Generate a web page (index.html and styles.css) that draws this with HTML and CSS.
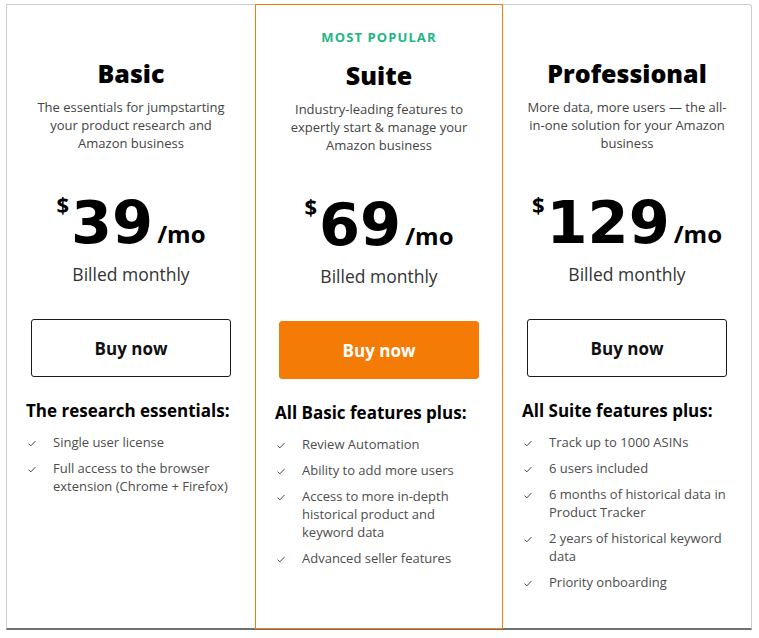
FILE: index.html
```html
<!DOCTYPE html>
<html lang="en">
<head>
<meta charset="utf-8">
<title>Pricing</title>
<link rel="stylesheet" href="styles.css">
</head>
<body>
<div class="pricing">
  <section class="plan">
    <h2 class="plan-name">Basic</h2>
    <p class="plan-desc">The essentials for jumpstarting your product research and Amazon business</p>
    <div class="price"><span class="cur">$</span><span class="amt">39</span><span class="per">/mo</span></div>
    <p class="billing">Billed monthly</p>
    <a class="buy" href="#">Buy now</a>
    <div class="features">
      <h3>The research essentials:</h3>
      <ul>
        <li><svg class="check" viewBox="0 0 8 7"><polyline points="0.5,3.6 2.8,5.9 7.5,1"/></svg><span>Single user license</span></li>
        <li><svg class="check" viewBox="0 0 8 7"><polyline points="0.5,3.6 2.8,5.9 7.5,1"/></svg><span>Full access to the browser extension (Chrome + Firefox)</span></li>
      </ul>
    </div>
  </section>
  <section class="plan featured">
    <p class="badge">MOST POPULAR</p>
    <h2 class="plan-name">Suite</h2>
    <p class="plan-desc">Industry-leading features to expertly start &amp; manage your Amazon business</p>
    <div class="price"><span class="cur">$</span><span class="amt">69</span><span class="per">/mo</span></div>
    <p class="billing">Billed monthly</p>
    <a class="buy primary" href="#">Buy now</a>
    <div class="features">
      <h3>All Basic features plus:</h3>
      <ul>
        <li><svg class="check" viewBox="0 0 8 7"><polyline points="0.5,3.6 2.8,5.9 7.5,1"/></svg><span>Review Automation</span></li>
        <li><svg class="check" viewBox="0 0 8 7"><polyline points="0.5,3.6 2.8,5.9 7.5,1"/></svg><span>Ability to add more users</span></li>
        <li><svg class="check" viewBox="0 0 8 7"><polyline points="0.5,3.6 2.8,5.9 7.5,1"/></svg><span>Access to more in-depth historical product and keyword data</span></li>
        <li><svg class="check" viewBox="0 0 8 7"><polyline points="0.5,3.6 2.8,5.9 7.5,1"/></svg><span>Advanced seller features</span></li>
      </ul>
    </div>
  </section>
  <section class="plan">
    <h2 class="plan-name">Professional</h2>
    <p class="plan-desc">More data, more users — the all-in-one solution for your Amazon business</p>
    <div class="price"><span class="cur">$</span><span class="amt">129</span><span class="per">/mo</span></div>
    <p class="billing">Billed monthly</p>
    <a class="buy" href="#">Buy now</a>
    <div class="features">
      <h3>All Suite features plus:</h3>
      <ul>
        <li><svg class="check" viewBox="0 0 8 7"><polyline points="0.5,3.6 2.8,5.9 7.5,1"/></svg><span>Track up to 1000 ASINs</span></li>
        <li><svg class="check" viewBox="0 0 8 7"><polyline points="0.5,3.6 2.8,5.9 7.5,1"/></svg><span>6 users included</span></li>
        <li><svg class="check" viewBox="0 0 8 7"><polyline points="0.5,3.6 2.8,5.9 7.5,1"/></svg><span>6 months of historical data in Product Tracker</span></li>
        <li><svg class="check" viewBox="0 0 8 7"><polyline points="0.5,3.6 2.8,5.9 7.5,1"/></svg><span>2 years of historical keyword data</span></li>
        <li><svg class="check" viewBox="0 0 8 7"><polyline points="0.5,3.6 2.8,5.9 7.5,1"/></svg><span>Priority onboarding</span></li>
      </ul>
    </div>
  </section>
</div>
</body>
</html>
```
FILE: styles.css
```css
body {
  margin: 0;
  background: #fff;
  font-family: "Open Sans", "Liberation Sans", sans-serif;
  color: #000;
}

.pricing {
  margin: 4px 7px 0 6px;
  height: 626px;
  box-sizing: border-box;
  display: grid;
  grid-template-columns: repeat(3, 1fr);
  border: 1px solid #c9ced3;
  border-bottom: 2px solid #6e7173;
  border-top-right-radius: 3px;
}

.plan {
  display: flex;
  flex-direction: column;
  align-items: center;
  text-align: center;
  padding-top: 53px;
  min-width: 0;
}

.plan.featured {
  border: 1px solid #f47c0a;
  margin: -1px 0 -1px;
  padding-top: 23px;
}

.badge {
  margin: 0;
  font-size: 13px;
  line-height: 18px;
  font-weight: 700;
  letter-spacing: 1.1px;
  color: #1fb585;
}

.plan-name {
  margin: 0;
  font-size: 25px;
  line-height: 30px;
  font-weight: 800;
  color: #000;
}

.featured .plan-name {
  margin-top: 14px;
}

.plan-desc {
  margin: 10px 0 0;
  max-width: 200px;
  font-size: 13px;
  line-height: 18px;
  color: #444;
}

.price {
  margin-top: 41px;
  display: flex;
  justify-content: center;
  align-items: baseline;
  color: #000;
}

.cur {
  align-self: flex-start;
  font-size: 22px;
  line-height: 22px;
  font-weight: 700;
  margin-right: 2px;
}

.amt {
  font-family: "DejaVu Sans", sans-serif;
  font-size: 59px;
  line-height: 60px;
  font-weight: 700;
}

.per {
  font-size: 24px;
  line-height: 30px;
  font-weight: 700;
  margin-left: 4px;
}

.billing {
  margin: 9px 0 0;
  font-size: 17.5px;
  line-height: 24px;
  color: #333;
}

.buy {
  margin-top: 33px;
  width: 200px;
  height: 58px;
  box-sizing: border-box;
  display: flex;
  align-items: center;
  justify-content: center;
  border: 1px solid #1b1b1b;
  border-radius: 3px;
  background: #fff;
  color: #111;
  font-size: 17px;
  font-weight: 700;
  text-decoration: none;
}

.buy.primary {
  background: #f57b07;
  border-color: #f57b07;
  color: #fff;
}

.features {
  align-self: stretch;
  margin-top: 22px;
  padding: 0 20px 0 19px;
  text-align: left;
}

.features h3 {
  margin: 0;
  font-size: 17px;
  line-height: 24px;
  font-weight: 700;
  white-space: nowrap;
  color: #000;
}

.features ul {
  margin: 10px 0 0;
  padding: 0;
  list-style: none;
}

.features li {
  display: flex;
  align-items: flex-start;
  margin-bottom: 8px;
  font-size: 13px;
  line-height: 18px;
  color: #4d4d4d;
}

.check {
  flex-shrink: 0;
  width: 8px;
  height: 7px;
  margin: 7px 17px 0 2px;
  fill: none;
  stroke: #444;
  stroke-width: 1;
}
```
